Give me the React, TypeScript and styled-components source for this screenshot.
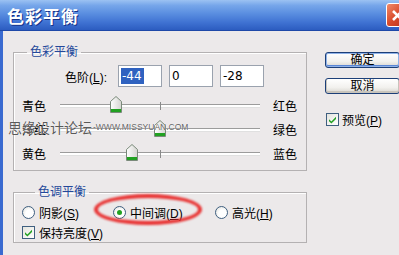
import styled, { createGlobalStyle } from 'styled-components'

const GlobalStyle = createGlobalStyle`
  html, body {
    margin: 0;
    padding: 0;
    overflow: hidden;
    background: #ece9ea;
  }
  body {
    font-family: 'Liberation Sans', 'Noto Sans CJK SC', sans-serif;
    font-size: 12px;
    color: #000;
  }
`

const sliders = [
  { left: '青色', right: '红色', value: -44 },
  { left: '洋红', right: '绿色', value: 0 },
  { left: '黄色', right: '蓝色', value: -28 },
]

const Check = () => (
  <svg width='9' height='9' viewBox='0 0 9 9'>
    <path d='M1 4.2 L3.4 6.6 L8 1.8 L8 4 L3.4 8.6 L1 6.3 Z' fill='#21a121' />
  </svg>
)

const Thumb = () => (
  <svg width='12' height='17' viewBox='0 0 12 17'>
    <defs>
      <linearGradient id='tg' x1='0' y1='0' x2='1' y2='0'>
        <stop offset='0' stopColor='#ffffff' />
        <stop offset='1' stopColor='#d4d4d0' />
      </linearGradient>
    </defs>
    <path d='M6 0.5 L11.5 5.5 L11.5 16.5 L0.5 16.5 L0.5 5.5 Z' fill='url(#tg)' stroke='#7a8a7a' />
    <rect x='1' y='13' width='10' height='3' fill='#21a121' />
  </svg>
)

const App = () => {
  return (
    <Page>
      <GlobalStyle />
      <TitleBar>
        <Title>色彩平衡</Title>
        <CloseButton>
          <svg width='13' height='13' viewBox='0 0 13 13'>
            <path d='M2 2 L11 11 M11 2 L2 11' stroke='#fff' strokeWidth='2.6' />
          </svg>
        </CloseButton>
      </TitleBar>
      <Body>
        <LeftColumn>
          <Group>
            <Legend>色彩平衡</Legend>
            <LevelRow>
              <LevelLabel>
                色阶(<u>L</u>):
              </LevelLabel>
              <Field>
                <Selected>-44</Selected>
              </Field>
              <Field>0</Field>
              <Field>-28</Field>
            </LevelRow>
            {sliders.map((s) => (
              <SliderRow key={s.right}>
                <SideLabel>{s.left}</SideLabel>
                <Track>
                  <Tick />
                  <ThumbWrap style={{ left: s.value + 100 - 6 }}>
                    <Thumb />
                  </ThumbWrap>
                </Track>
                <RightLabel>{s.right}</RightLabel>
              </SliderRow>
            ))}
          </Group>
          <Group $second>
            <Legend>色调平衡</Legend>
            <RadioRow>
              <RadioItem>
                <Radio />
                <span>
                  阴影(<u>S</u>)
                </span>
              </RadioItem>
              <RadioItem>
                <Highlight />
                <Radio $checked />
                <span>
                  中间调(<u>D</u>)
                </span>
              </RadioItem>
              <RadioItem>
                <Radio />
                <span>
                  高光(<u>H</u>)
                </span>
              </RadioItem>
            </RadioRow>
            <CheckRow>
              <CheckBox>
                <Check />
              </CheckBox>
              <span>
                保持亮度(<u>V</u>)
              </span>
            </CheckRow>
          </Group>
        </LeftColumn>
        <RightColumn>
          <PushButton $default>确定</PushButton>
          <PushButton>取消</PushButton>
          <PreviewRow>
            <CheckBox>
              <Check />
            </CheckBox>
            <span>
              预览(<u>P</u>)
            </span>
          </PreviewRow>
        </RightColumn>
      </Body>
      <Watermark>
        思缘设计论坛<WatermarkUrl>-WWW.MISSYUAN.COM</WatermarkUrl>
      </Watermark>
    </Page>
  )
}
export default App

const Page = styled.div`
  position: relative;
  width: 410px;
  height: 255px;
  overflow: hidden;
  background: #ece9ea;
`

const TitleBar = styled.div`
  height: 30px;
  border-bottom: 1px solid #1e48a8;
  background: linear-gradient(
    180deg,
    #9cc2f2 0%,
    #76a6ea 18%,
    #5a8ee0 45%,
    #3f72d2 75%,
    #2c5cc0 100%
  );
  display: flex;
  align-items: center;
  justify-content: space-between;
  padding-left: 7px;
`

const Title = styled.div`
  color: #fff;
  font-family: 'Noto Sans CJK SC', sans-serif;
  font-size: 17px;
  font-weight: 700;
  letter-spacing: 1px;
  text-shadow: 1px 1px 0 #17348a;
`

const CloseButton = styled.div`
  width: 21px;
  height: 22px;
  margin-right: 1px;
  border: 1px solid #fff;
  border-radius: 3px;
  background: linear-gradient(135deg, #f08a6a 0%, #d84a2a 50%, #b8301a 100%);
  display: flex;
  align-items: center;
  justify-content: center;
`

const Body = styled.div`
  display: flex;
  border-left: 3px solid #3a6ad0;
  height: 224px;
`

const LeftColumn = styled.div`
  padding: 14px 0 0 10px;
  width: 294px;
`

const Group = styled.fieldset<{ $second?: boolean }>`
  margin: ${(p) => (p.$second ? '14px 0 0' : '0')};
  padding: ${(p) => (p.$second ? '5px 0 2px 8px' : '6px 0 5px 0')};
  border: 1px solid #b4b1b2;
  box-shadow: inset 1px 1px 0 #fff;
  min-width: 0;
`

const Legend = styled.legend`
  margin-left: 13px;
  padding: 0 3px;
  line-height: 14px;
  color: #24489a;
  font-size: 12px;
`

const LevelRow = styled.div`
  display: flex;
  align-items: center;
  height: 22px;
  gap: 7px;
  margin-bottom: 6px;
`

const LevelLabel = styled.div`
  width: 93px;
  margin-right: 4px;
  text-align: right;
`

const Field = styled.div`
  width: 40px;
  height: 20px;
  border: 1px solid #9aa2ae;
  background: #fff;
  font-family: 'DejaVu Sans', sans-serif;
  font-size: 12px;
  line-height: 20px;
  padding-left: 2px;
  box-sizing: content-box;
`

const Selected = styled.span`
  display: inline-block;
  background: #2f62c0;
  color: #fff;
  line-height: 16px;
  padding: 0 2px 0 1px;
`

const SliderRow = styled.div`
  display: flex;
  align-items: center;
  height: 24px;
  padding-left: 8px;
`

const SideLabel = styled.div`
  width: 38px;
`

const Track = styled.div`
  position: relative;
  width: 200px;
  height: 2px;
  border-top: 1px solid #9c9c9c;
  background: #fff;
  border-bottom: 1px solid #e0e0e0;
  margin-top: 2px;
`

const Tick = styled.div`
  position: absolute;
  left: 100px;
  top: -3px;
  width: 1px;
  height: 8px;
  background: #8a8a8a;
`

const ThumbWrap = styled.div`
  position: absolute;
  top: -9px;
  line-height: 0;
`

const RightLabel = styled.div`
  margin-left: 13px;
`

const RadioRow = styled.div`
  display: grid;
  grid-template-columns: 91px 102px auto;
  height: 16px;
  align-items: center;
  margin-bottom: 4px;
`

const RadioItem = styled.div`
  position: relative;
  display: flex;
  align-items: center;
  gap: 4px;
`

const Radio = styled.span<{ $checked?: boolean }>`
  width: 11px;
  height: 11px;
  border: 1px solid #3f5f80;
  border-radius: 50%;
  background: radial-gradient(circle at 60% 60%, #ffffff 40%, #dcdcd6 100%);
  display: flex;
  align-items: center;
  justify-content: center;

  &::after {
    content: '';
    display: ${(p) => (p.$checked ? 'block' : 'none')};
    width: 5px;
    height: 5px;
    border-radius: 50%;
    background: #21a121;
  }
`

const Highlight = styled.span`
  position: absolute;
  left: -19px;
  top: -10px;
  width: 100px;
  height: 23px;
  border: 4px solid rgba(232, 40, 40, 0.95);
  border-radius: 50%;
  filter: blur(1.2px);
  pointer-events: none;
`

const CheckRow = styled.div`
  display: flex;
  align-items: center;
  gap: 4px;
  height: 16px;
`

const CheckBox = styled.span`
  width: 11px;
  height: 11px;
  border: 1px solid #3f5f80;
  background: linear-gradient(135deg, #e4e4de 0%, #ffffff 100%);
  display: flex;
  align-items: center;
  justify-content: center;
  line-height: 0;
`

const RightColumn = styled.div`
  margin-left: 18px;
  padding-top: 21px;
  width: 75px;
  display: flex;
  flex-direction: column;
  gap: 10px;
`

const PushButton = styled.div<{ $default?: boolean }>`
  height: 14px;
  border: 1px solid #1c3f78;
  border-radius: 3px;
  background: linear-gradient(180deg, #ffffff 0%, #f2f1ee 60%, #d8d5ce 100%);
  box-shadow: ${(p) =>
    p.$default ? 'inset 0 0 0 1px #8fb2e8, inset 0 -1px 0 1px #5a86d6' : 'inset 0 -1px 0 1px #c8c4bc'};
  display: flex;
  align-items: center;
  justify-content: center;
  font-size: 12px;
  line-height: 14px;
`

const PreviewRow = styled.div`
  display: flex;
  align-items: center;
  gap: 3px;
  height: 14px;
  margin-top: 8px;
  padding-left: 1px;
`

const Watermark = styled.div`
  position: absolute;
  left: 8px;
  top: 117px;
  font-family: 'Noto Sans CJK SC', sans-serif;
  font-size: 14px;
  color: rgba(60, 60, 60, 0.85);
  text-shadow: 0 0 1px #fff;
  display: flex;
  align-items: center;
  white-space: nowrap;
`

const WatermarkUrl = styled.span`
  font-family: 'Liberation Sans', sans-serif;
  font-size: 8.5px;
  color: rgba(80, 80, 80, 0.9);
  margin-left: 1px;
`
